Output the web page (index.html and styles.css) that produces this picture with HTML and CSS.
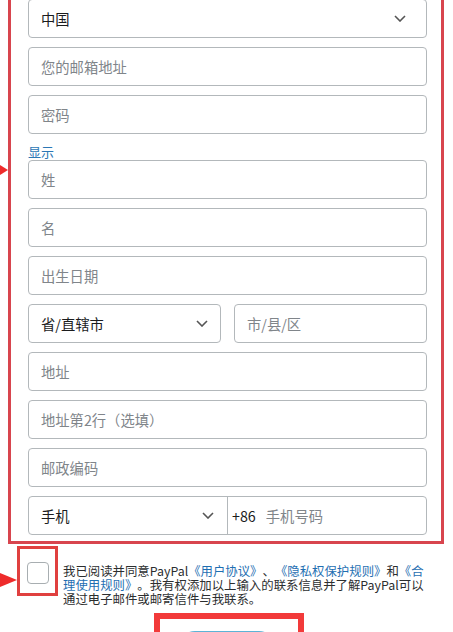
FILE: index.html
```html
<!DOCTYPE html>
<html lang="zh-CN">
<head>
  <meta charset="UTF-8" />
  <meta name="viewport" content="width=device-width, initial-scale=1.0"/>
  <title>注册 PayPal</title>
  <link rel="stylesheet" href="styles.css">
</head>
<body>
  <form class="signup">
    <span class="pointer pointer-name"></span>

    <div class="field select">
      <span class="value">中国</span>
      <svg class="chevron" width="12" height="7" viewBox="0 0 12 7"><path d="M1 1l5 5 5-5"/></svg>
    </div>
    <input class="field" type="email" placeholder="您的邮箱地址" />
    <input class="field field-flush" type="password" placeholder="密码" />
    <a class="show-link" href="#">显示</a>
    <input class="field" type="text" placeholder="姓" />
    <input class="field" type="text" placeholder="名" />
    <input class="field" type="text" placeholder="出生日期" />

    <div class="field-row">
      <div class="field select province">
        <span class="value">省/直辖市</span>
        <svg class="chevron" width="12" height="7" viewBox="0 0 12 7"><path d="M1 1l5 5 5-5"/></svg>
      </div>
      <input class="field" type="text" placeholder="市/县/区" />
    </div>

    <input class="field" type="text" placeholder="地址" />
    <input class="field" type="text" placeholder="地址第2行（选填）" />
    <input class="field" type="text" placeholder="邮政编码" />

    <div class="field phone">
      <div class="phone-type">
        <span class="value">手机</span>
        <svg class="chevron" width="12" height="7" viewBox="0 0 12 7"><path d="M1 1l5 5 5-5"/></svg>
      </div>
      <span class="dial-code">+86</span>
      <input class="phone-number" type="tel" placeholder="手机号码" />
    </div>
  </form>

  <div class="consent">
    <label class="consent-mark">
      <span class="pointer pointer-consent"></span>
      <input type="checkbox" />
    </label>
    <p class="consent-text">
      我已阅读并同意PayPal<a href="#">《用户协议》</a>、<a href="#">《隐私权保护规则》</a>和<a href="#">《合理使用规则》</a>。我有权添加以上输入的联系信息并了解PayPal可以通过电子邮件或邮寄信件与我联系。
    </p>
  </div>

  <div class="submit-frame">
    <button class="submit" type="submit"></button>
  </div>
</body>
</html>
```

FILE: styles.css
```css
* {
  box-sizing: border-box;
}

body {
  margin: 0;
  background: #fff;
  font-family: "Noto Sans CJK SC", "Noto Sans", sans-serif;
  color: #2c2e2f;
  overflow: hidden;
}

/* highlighted sign-up block */
.signup {
  position: relative;
  width: 436px;
  margin: -12px 0 0 8px;
  padding: 8px 14px 6px 17px;
  border: 3px solid #d8454e;
}

.field {
  display: flex;
  align-items: center;
  width: 100%;
  height: 39px;
  margin: 0 0 9px;
  padding: 0 12px;
  border: 1px solid #b3b8bb;
  border-radius: 4px;
  background: #fff;
  font-family: inherit;
  font-size: 14.3px;
  color: #2c2e2f;
  outline: none;
}

.field::placeholder,
.phone-number::placeholder {
  color: #80858a;
}

.field-flush {
  margin-bottom: 0;
}

.show-link {
  display: block;
  padding-top: 9px;
  font-size: 13px;
  line-height: 17px;
  color: #2b77b5;
  text-decoration: none;
}

.select {
  justify-content: space-between;
  padding-right: 20px;
}

.select .value,
.phone-type .value,
.dial-code {
  color: #1b1c1d;
}

.chevron {
  fill: none;
  stroke: #555;
  stroke-width: 1.6;
}

.field-row {
  display: flex;
  gap: 13px;
}

.field-row .province {
  flex: 0 0 192px;
  padding-right: 12px;
}

.field-row .field {
  flex: 1;
}

/* phone: type picker + number share one box */
.phone {
  padding: 0;
  margin-bottom: 0;
}

.phone-type {
  display: flex;
  align-items: center;
  justify-content: space-between;
  width: 199px;
  height: 100%;
  padding: 0 13px 0 12px;
  border-right: 1px solid #b3b8bb;
}

.dial-code {
  padding: 0 10px 0 4px;
}

.phone-number {
  flex: 1;
  min-width: 0;
  height: 100%;
  border: none;
  background: transparent;
  font: inherit;
  color: #2c2e2f;
  outline: none;
  padding: 0;
}

/* terms checkbox */
.consent {
  display: flex;
  align-items: flex-start;
  margin: 2px 0 0 17px;
}

.consent-mark {
  position: relative;
  flex-shrink: 0;
  width: 41px;
  height: 50px;
  padding: 13px 0 0 7px;
  border: 3px solid #e0403f;
}

.consent-mark input {
  display: block;
  width: 22px;
  height: 22px;
  margin: 0;
  appearance: none;
  border: 1px solid #a8aeb1;
  border-radius: 4px;
  background: #fff;
}

.consent-text {
  width: 370px;
  margin: 18px 0 0 5px;
  font-size: 12.4px;
  line-height: 14px;
  text-spacing-trim: space-all;
}

.consent-text a {
  color: #1f6fb2;
  text-decoration: none;
}

/* red markers */
.pointer {
  position: absolute;
  width: 0;
  height: 0;
  border-style: solid;
  border-color: transparent transparent transparent #ee2b2b;
}

.pointer-name {
  left: -19px;
  top: 169px;
  border-width: 10px 0 10px 16px;
}

.pointer-consent {
  left: -27px;
  top: 21px;
  border-width: 10px 0 10px 24px;
}

.submit-frame {
  width: 150px;
  height: 40px;
  margin: 7px 0 0 154px;
  padding: 12px 0 0 20px;
  border: 6px solid #f23a3a;
  border-bottom: none;
}

.submit {
  display: block;
  width: 94px;
  height: 30px;
  border: 2px solid #5cb3d6;
  border-radius: 16px;
  background: #c4e7f5;
}
```
